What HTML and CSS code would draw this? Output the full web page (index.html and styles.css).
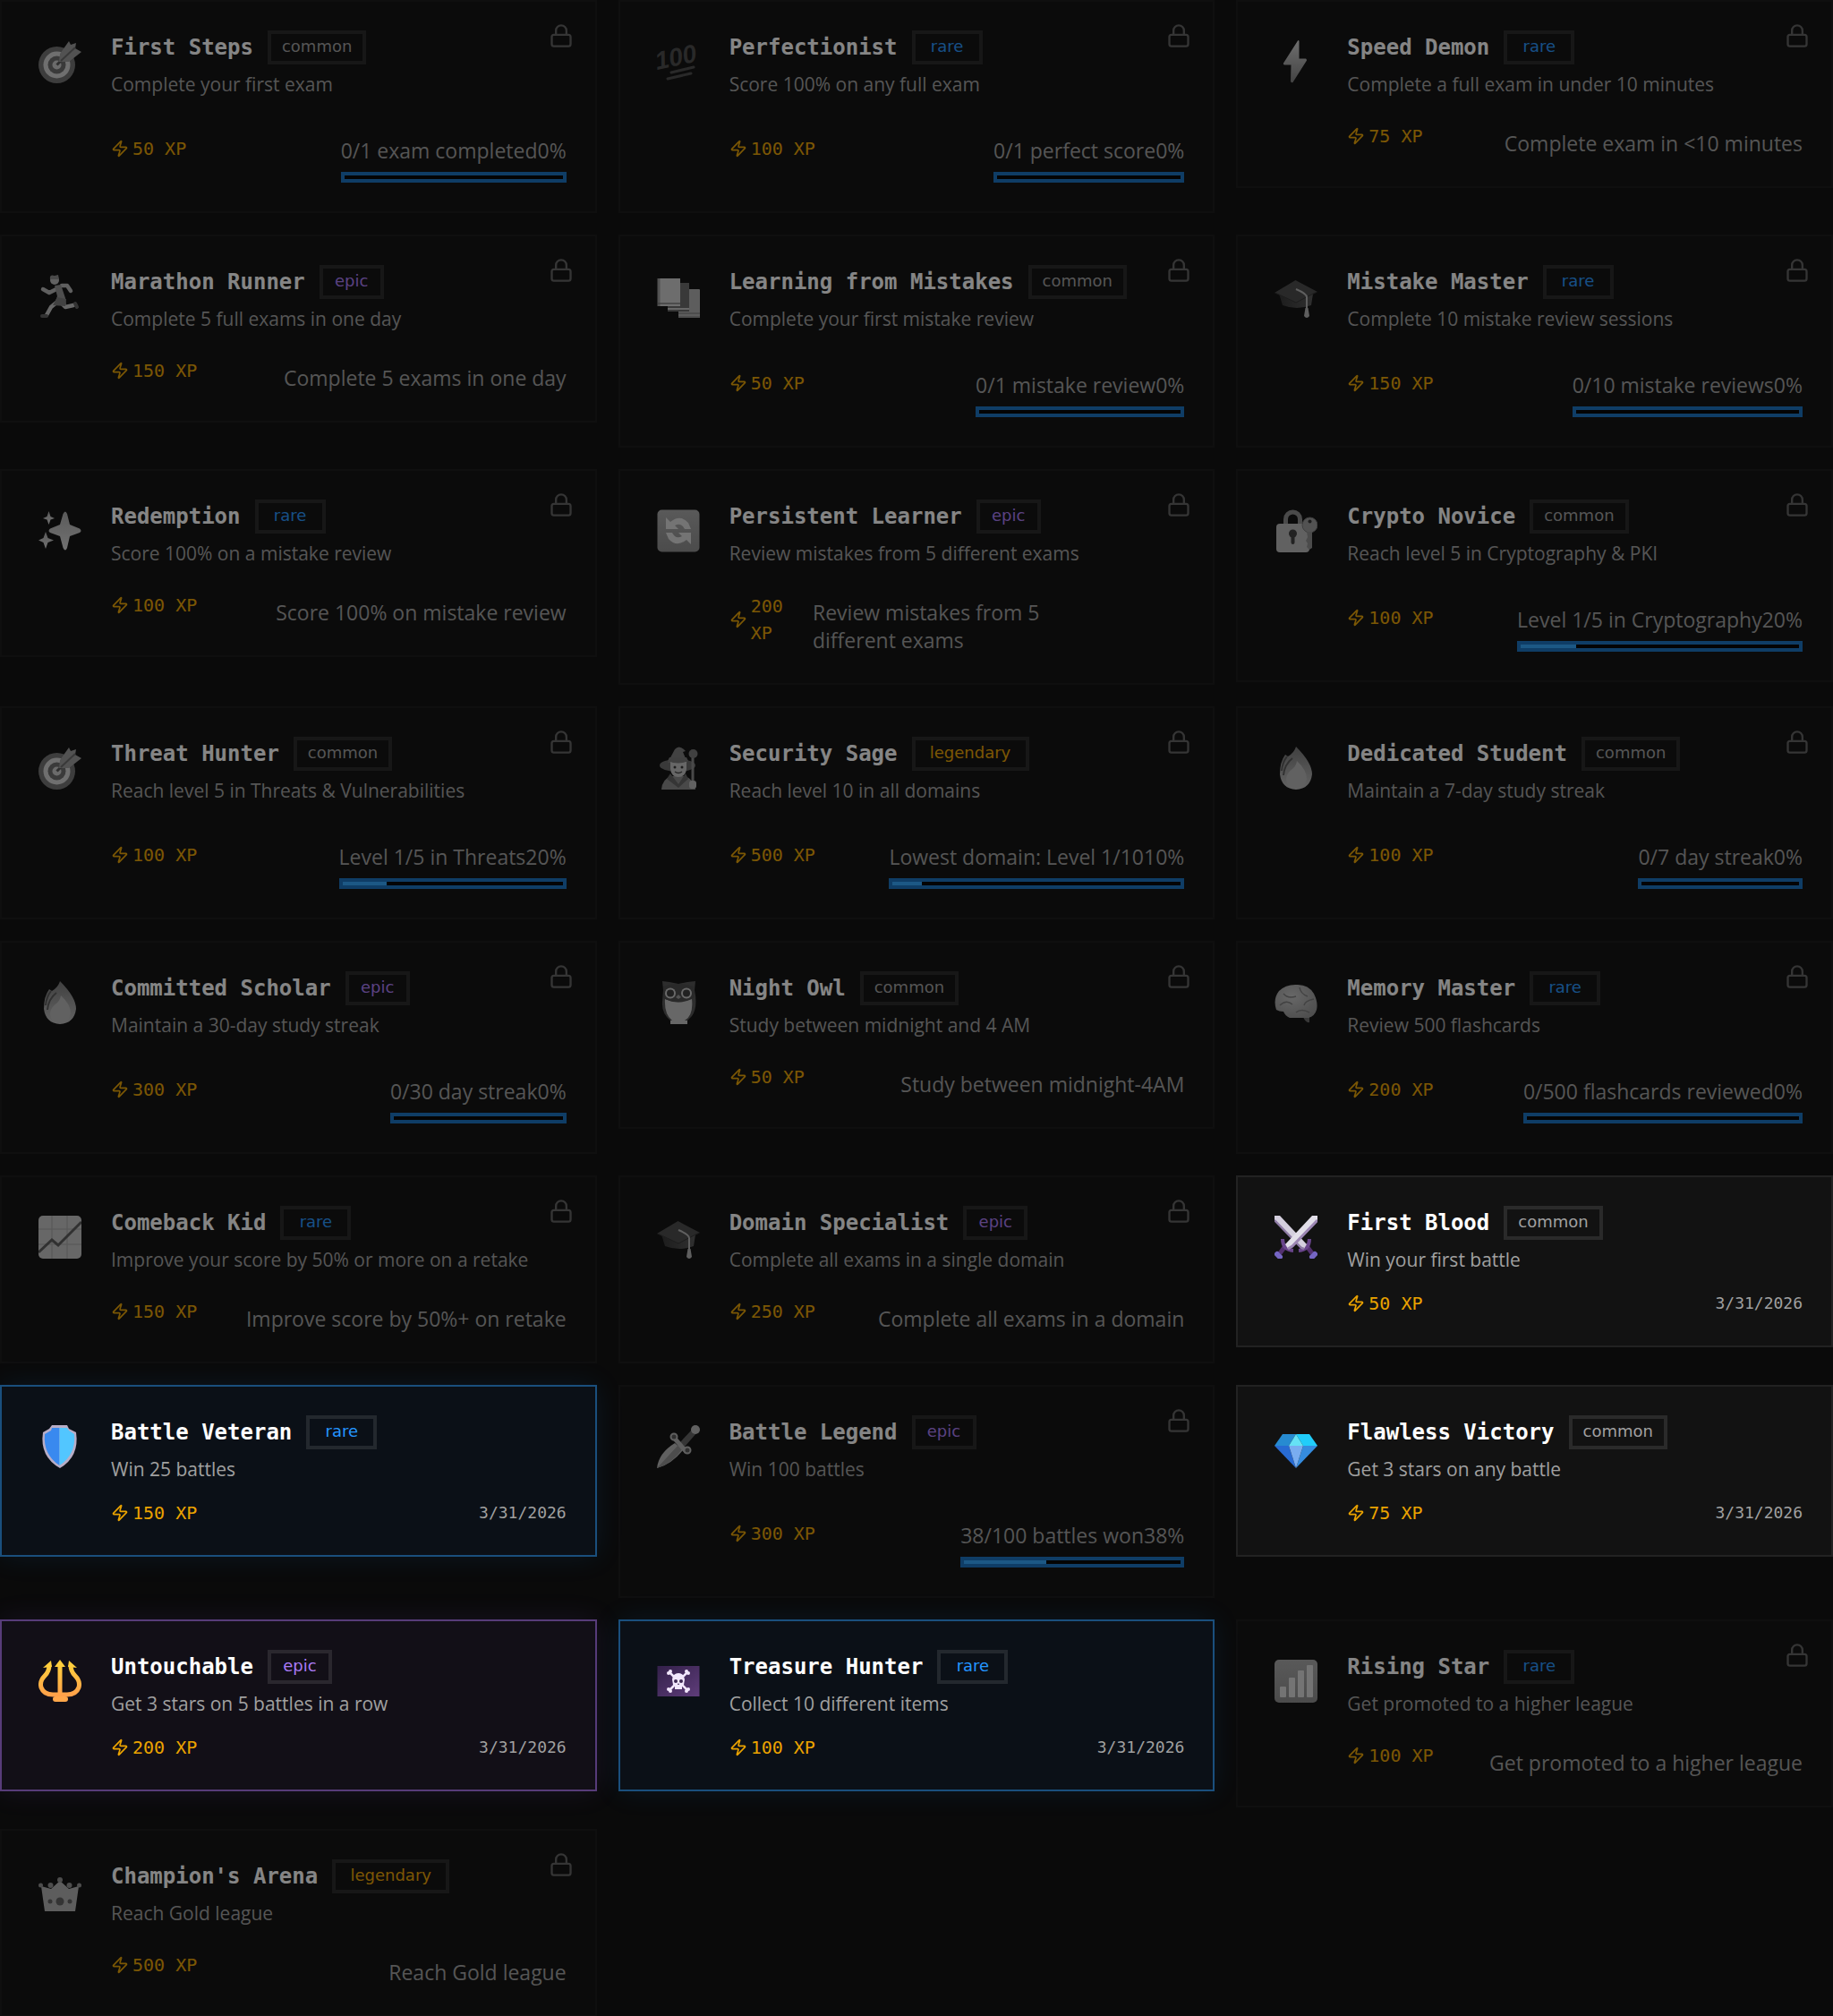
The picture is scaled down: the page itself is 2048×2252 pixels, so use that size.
FILE: index.html
```
<!DOCTYPE html>
<html lang="en">
<head>
    <meta charset="UTF-8">
    <meta name="viewport" content="width=device-width, initial-scale=1.0">
    <title>Achievements</title>
    <link rel="stylesheet" href="styles.css">
</head>
<body>
    <!-- icon sprite -->
    <svg class="sprite" aria-hidden="true">
        <defs>
            <linearGradient id="gLight" x1="0" y1="0" x2="0" y2="1"><stop offset="0" stop-color="#aaa"/><stop offset="1" stop-color="#d8d8d8"/></linearGradient>
            <linearGradient id="gDown" x1="0" y1="0" x2="0" y2="1"><stop offset="0" stop-color="#d2d2d2"/><stop offset="1" stop-color="#7c7c7c"/></linearGradient>
            <linearGradient id="gFlame" x1="0" y1="0" x2="0" y2="1"><stop offset="0" stop-color="#777"/><stop offset="1" stop-color="#bbb"/></linearGradient>
            <linearGradient id="gTile" x1="0" y1="0" x2="0" y2="1"><stop offset="0" stop-color="#a8a8a8"/><stop offset="1" stop-color="#8c8c8c"/></linearGradient>
            <linearGradient id="gCap" x1="0" y1="0" x2="1" y2="0"><stop offset="0" stop-color="#303030"/><stop offset="1" stop-color="#555"/></linearGradient>
            <linearGradient id="gGold" x1="0" y1="0" x2="0" y2="1"><stop offset="0" stop-color="#ffce3d"/><stop offset="1" stop-color="#ff9f4a"/></linearGradient>
            <linearGradient id="gFlag" x1="0" y1="0" x2="1" y2="1"><stop offset="0" stop-color="#33204a"/><stop offset="1" stop-color="#5f3d7a"/></linearGradient>
            <radialGradient id="gBrain" cx=".4" cy=".35" r=".7"><stop offset="0" stop-color="#c4c4c4"/><stop offset="1" stop-color="#949494"/></radialGradient>
        </defs>
        <symbol id="lock" viewBox="0 0 24 24"><g fill="none" stroke="currentColor" stroke-width="2" stroke-linecap="round" stroke-linejoin="round"><rect x="3" y="11" width="18" height="11" rx="2"/><path d="M7 11V7a5 5 0 0 1 10 0v4"/></g></symbol>
        <symbol id="zap" viewBox="0 0 24 24"><path fill="none" stroke="currentColor" stroke-width="2" stroke-linecap="round" stroke-linejoin="round" d="M4 14a1 1 0 0 1-.78-1.63l9.9-10.2a.5.5 0 0 1 .86.46l-1.92 6.02A1 1 0 0 0 13 10h7a1 1 0 0 1 .78 1.63l-9.9 10.2a.5.5 0 0 1-.86-.46l1.92-6.02A1 1 0 0 0 11 14z"/></symbol>

        <symbol id="target" viewBox="0 0 48 48">
            <circle cx="20.500" cy="27.500" r="20.500" fill="#707070"/><circle cx="20.500" cy="27.500" r="15" fill="#d4d4d4"/><circle cx="20.500" cy="27.500" r="10" fill="#6a6a6a"/><circle cx="20.500" cy="27.500" r="5" fill="#ccc"/>
            <path d="M20.500 27.500 31 17" stroke="#555" stroke-width="3"/>
            <path d="M23 24 24 15 34 1 36 5 42 3 41 9 48 13 34 24z" fill="#9a9a9a"/><path d="M25 23 41 8" stroke="#686868" stroke-width="2"/>
        </symbol>
        <symbol id="bolt" viewBox="0 0 48 48"><path d="M26 .500 10 25.500Q9.500 27 11 27.500H18.500L18 46Q19 48 20.500 47L36 22.500Q36 21 35 20.500H27.500L27.500 1Q27-.500 26 .500z" fill="url(#gDown)"/></symbol>
        <symbol id="runner" viewBox="0 0 48 48">
            <g fill="none" stroke-linecap="round" stroke-linejoin="round"><path d="M20 16 12 20 5 16M26 12 32 12 36 18" stroke="#b4b4b4" stroke-width="4.500"/><path d="M20 31 14 36 9 45M27 33 30 36 39 34" stroke="#c4c4c4" stroke-width="4.500"/><path d="M9 46H4M41 32 43 36" stroke="#5c5c5c" stroke-width="4"/></g>
            <path d="M18 12 25 11 30 26 31 34 17 34 21 24z" fill="#929292"/><path d="M21 25 31 27 30 35 16 34z" fill="#7a7a7a"/><circle cx="18" cy="6" r="5" fill="#b8b8b8"/><path d="M13 5Q12-1 18 1L22 0 23 5z" fill="#8a8a8a"/>
        </symbol>
        <symbol id="books" viewBox="0 0 48 48">
            <path d="M24 16H47Q48 16 48 17V46H24z" fill="#b0b0b0"/><path d="M24 43H48M24 47H48" stroke="#909090" stroke-width="2"/><path d="M12 9H36V41H12z" fill="#686868"/><path d="M12 38H36" stroke="#c4c4c4" stroke-width="2"/><path d="M1 4H26V35H1z" fill="#d0d0d0"/><path d="M2 4V35" stroke="#999" stroke-width="3"/><path d="M1 32H26" stroke="#777" stroke-width="1.500"/>
        </symbol>
        <symbol id="gradcap" viewBox="0 0 48 48">
            <path d="M5 21 43 21 41 34Q25 40 9 34z" fill="url(#gCap)"/><path d="M23.500 6 48 19 24 31 0 20z" fill="#484848"/><path d="M1 20 24 31 47 19" fill="none" stroke="#303030"/>
            <path d="M24 16Q36 21 36 25V38" fill="none" stroke="#b4b4b4" stroke-width="2"/><path d="M34.500 37H37.500L39 46Q36 50 33 46z" fill="#b4b4b4"/>
        </symbol>
        <symbol id="sparkles" viewBox="0 0 48 48" fill="url(#gLight)">
            <path d="M27.500 5Q30 0 32 5L35 17 46 21.500Q49 24 46 26L35 30 32 43Q30 48 27.500 43L24 30 13 26Q10 24 13 21.500L24 17z"/><path d="M11.500 2 13.500 8 18 10 13.500 11.500 11.500 17 9.500 11.500 5 10 9.500 8z"/><path d="M8 25 10.500 32 17 34.500 10.500 37 8 44 5.500 37 0 34.500 5.500 32z"/>
        </symbol>
        <symbol id="refresh" viewBox="0 0 48 48">
            <rect x=".500" y=".500" width="47" height="47" rx="5" fill="url(#gTile)"/>
            <path d="M10 9 15 14Q26 5 35 15L38 22H31Q27 14 20 18L24 22H10zM38 39 33 34Q22 43 13 33L10 26H17Q21 34 28 30L24 26H38z" fill="#dedede"/>
        </symbol>
        <symbol id="lockkey" viewBox="0 0 48 48">
            <path d="M12.500 18V11a8 8 0 0 1 16 0v7" fill="none" stroke="#8a8a8a" stroke-width="5"/><rect x="2" y="16" width="37" height="32" rx="4" fill="#b8b8b8"/><circle cx="20.500" cy="27" r="4.500" fill="#3a3a3a"/><path d="M20.500 28V37" stroke="#3a3a3a" stroke-width="4" stroke-linecap="round"/>
            <circle cx="39.500" cy="17.500" r="8.500" fill="#9a9a9a" stroke="#707070"/><circle cx="39.500" cy="13.500" r="2" fill="#333"/><path d="M36 25H42V43L39 45 36 42 37 38 35 35 37 31z" fill="#8c8c8c"/>
        </symbol>
        <symbol id="mage" viewBox="0 0 48 48">
            <ellipse cx="23" cy="21" rx="20" ry="7" fill="#686868"/><path d="M12 18 20 3Q25-3 32 5L29 6 34 18z" fill="#7a7a7a"/><path d="M5 48Q6 36 16 33H31Q41 36 43 48z" fill="#888"/><path d="M15 30 24 42 32 30 35 36 24 46 11 36z" fill="#606060"/><path d="M15 17H33V25Q32 34 24 34 16 34 15 25z" fill="#c4c4c4"/><path d="M12 16Q24 21 35 16L33 12H14z" fill="#777"/>
            <circle cx="20" cy="23" r="1.500" fill="#333"/><circle cx="28" cy="23" r="1.500" fill="#333"/><path d="M20 28Q24 31 28 28" stroke="#444" stroke-width="1.500" fill="none"/><path d="M40 8V47" stroke="#888" stroke-width="3"/><circle cx="40.500" cy="8" r="5" fill="#777"/><rect x="36" y="38" width="8" height="9" rx="3" fill="#b8b8b8"/>
        </symbol>
        <symbol id="flame" viewBox="0 0 48 48">
            <path d="M24 0Q42 18 42 31 40 47 24 48 8 47 6 31 6 17 12 9L15 11Q22 7 24 0z" fill="url(#gFlame)"/><path d="M8 27Q9 17 14 11M10 32Q11 20 20 13" stroke="#585858" stroke-width="2" fill="none"/><path d="M25 16Q36 26 36 36 34 47 24 47 13 46 13 36 14 29 20 25 24 22 25 16z" fill="#b8b8b8"/>
        </symbol>
        <symbol id="owl" viewBox="0 0 48 48">
            <path d="M6 0 14 1 24 3 34 1 43 0 42 10Q46 29 39 39L34 44H15Q5 36 6 23L7 10z" fill="#505050"/><path d="M9 20Q24 27 39 20 41 38 31 44H17Q8 37 9 20z" fill="#c4c4c4"/><path d="M7 6Q24 0 41 6L42 18Q24 28 7 19z" fill="#484848"/>
            <circle cx="15" cy="13.500" r="6" fill="#c8c8c8"/><circle cx="33" cy="13.500" r="6" fill="#c8c8c8"/><circle cx="15" cy="13.500" r="4" fill="#383838"/><circle cx="33" cy="13.500" r="4" fill="#383838"/><path d="M21 18 24 15 27 18 24 20z" fill="#999"/><path d="M15 44H34V48H15z" fill="#c4c4c4"/>
        </symbol>
        <symbol id="brain" viewBox="0 0 48 48">
            <path d="M32 40H39V46Q35 47 32 40z" fill="#666"/><path d="M2 32Q-2 20 5 11 13 3 26 4 38 4 44 14 49 24 47 32 45 39 38 41L17 41Q12 39 10 34 5 34 2 32z" fill="url(#gBrain)"/><path d="M10 14Q15 20 24 17M28 7Q29 14 37 17M44 20Q34 22 33 27M6 27Q13 20 20 26M24 35Q30 30 39 35" stroke="#7a7a7a" stroke-width="1.500" fill="none"/>
        </symbol>
        <symbol id="chart" viewBox="0 0 48 48">
            <rect width="48" height="48" rx="5" fill="#c4c4c4"/><path d="M0 15H48M0 32H48M15 0V48M32 0V48" stroke="#a0a0a0"/><path d="M0 41 15 27 22 33 48 7" fill="none" stroke="#585858" stroke-width="3"/>
        </symbol>
        <symbol id="swords" viewBox="0 0 48 48">
            <path d="M6 42 12 34M42 42 36 34" stroke="#53306f" stroke-width="5"/><path d="M3 43 6 46M45 43 42 46" stroke="#7565c3" stroke-width="6" stroke-linecap="round"/><path d="M9 26Q9 38 21 39M39 26Q39 38 27 39" fill="none" stroke="#69458b" stroke-width="4"/>
            <path d="M0 0H6L36 32 33 37 28 34 0 5z" fill="#d4cfde"/><path d="M0 5 28 34 30 36 33 37" fill="none" stroke="#8e7ba5" stroke-width="2.500"/><path d="M48 0H42L12 32 15 37 20 34 48 5z" fill="#e2dfe9"/><path d="M48 5 20 34 15 37" fill="none" stroke="#9c86b3" stroke-width="3"/>
        </symbol>
        <symbol id="shield" viewBox="0 0 48 48">
            <path d="M15 0H32L34 4 42 8Q46 35 24 48 1 35 5 8L12 4z" fill="#b8adc6"/><path d="M23.500 3H15L14 6 7 10Q5 33 23.500 45z" fill="#3989ef"/><path d="M23.500 3H32L34 6 40 10Q42 33 23.500 45z" fill="#52c6ff"/>
        </symbol>
        <symbol id="dagger" viewBox="0 0 48 48">
            <path d="M0 48Q2 31 20 20L29 28Q16 44 0 48z" fill="#b8b8b8"/><path d="M0 48 24 22 28 27Q17 43 0 48z" fill="#909090"/><path d="M26 19 40 4 45 8 31 24z" fill="#606060"/><path d="M19 14 33 30" stroke="#b4b4b4" stroke-width="5"/><circle cx="19" cy="13" r="3.500" fill="#555" stroke="#b4b4b4" stroke-width="2"/><circle cx="34" cy="28" r="3.500" fill="#555" stroke="#b4b4b4" stroke-width="2"/><circle cx="43" cy="5" r="5" fill="#b8b8b8"/>
        </symbol>
        <symbol id="diamond" viewBox="0 0 48 48">
            <path d="M9 10 0 23H16L24 10z" fill="#278bd1"/><path d="M39 10 48 23H32L24 10z" fill="#21cdfa"/><path d="M24 10 32 23H16z" fill="#66e2f5"/><path d="M0 23H16L24 48z" fill="#286bd3"/><path d="M48 23H32L24 48z" fill="#358cdf"/><path d="M16 23H32L24 48z" fill="#79adf0"/>
        </symbol>
        <symbol id="trident" viewBox="0 0 48 48">
            <path d="M12 6Q12 13 7 18 1 24 3 31 6 39 16 39H32Q42 39 45 31 47 24 41 18 36 13 36 6M24 6V41" fill="none" stroke="url(#gGold)" stroke-width="5"/><path d="M5 9 14 1 15 8zM18 8 24 0 30 8zM33 8 34 1 43 9z" fill="#ffce3d"/><rect x="16" y="41" width="17" height="6" rx="3" fill="#ffa74b"/>
        </symbol>
        <symbol id="pirate" viewBox="0 0 48 48">
            <rect x=".500" y="7" width="47" height="34" fill="url(#gFlag)"/><path d="M14 14 34 34M34 14 14 34" stroke="#f2e7fc" stroke-width="2.500"/><g fill="#f2e7fc"><circle cx="13" cy="15" r="2"/><circle cx="15" cy="13" r="2"/><circle cx="35" cy="15" r="2"/><circle cx="33" cy="13" r="2"/><circle cx="13" cy="33" r="2"/><circle cx="15" cy="35" r="2"/><circle cx="35" cy="33" r="2"/><circle cx="33" cy="35" r="2"/></g><path d="M17 22Q18 15 24 15 30 15 31 22L30 28 28 29V33H20V29L18 28z" fill="#f2e7fc"/><circle cx="21" cy="24" r="2" fill="#3d2752"/><circle cx="27" cy="24" r="2" fill="#3d2752"/><path d="M23 28 24 26 25 28z" fill="#3d2752"/>
        </symbol>
        <symbol id="bars" viewBox="0 0 48 48">
            <rect width="48" height="48" rx="5" fill="url(#gTile)"/><g fill="#dedede"><rect x="6" y="30" width="7" height="12" rx="1"/><rect x="16" y="20" width="7" height="22" rx="1"/><rect x="26" y="12" width="7" height="30" rx="1"/><rect x="36" y="6" width="7" height="36" rx="1"/></g>
        </symbol>
        <symbol id="crown" viewBox="0 0 48 48">
            <path d="M3 19 14 22 24 13 34 22 45 19 41 47H7z" fill="#b0b0b0"/><g fill="#8f8f8f"><circle cx="2.500" cy="18" r="2.500"/><circle cx="45.500" cy="18" r="2.500"/><circle cx="13.500" cy="18" r="3"/><circle cx="34.500" cy="18" r="3"/><circle cx="24" cy="12" r="3"/></g><g fill="#5e5e5e"><circle cx="24" cy="36" r="4.500"/><circle cx="13" cy="36" r="2.500"/><circle cx="35" cy="36" r="2.500"/></g>
        </symbol>
    </svg>

    <main id="achievements" class="grid"></main>

    <script>
        var achievements = [
            { icon: "target", name: "First Steps", rarity: "common", desc: "Complete your first exam", xp: 50, text: "0/1 exam completed", percent: 0 },
            { icon: "hundred", name: "Perfectionist", rarity: "rare", desc: "Score 100% on any full exam", xp: 100, text: "0/1 perfect score", percent: 0 },
            { icon: "bolt", name: "Speed Demon", rarity: "rare", desc: "Complete a full exam in under 10 minutes", xp: 75, text: "Complete exam in <10 minutes" },
            { icon: "runner", name: "Marathon Runner", rarity: "epic", desc: "Complete 5 full exams in one day", xp: 150, text: "Complete 5 exams in one day" },
            { icon: "books", name: "Learning from Mistakes", rarity: "common", desc: "Complete your first mistake review", xp: 50, text: "0/1 mistake review", percent: 0 },
            { icon: "gradcap", name: "Mistake Master", rarity: "rare", desc: "Complete 10 mistake review sessions", xp: 150, text: "0/10 mistake reviews", percent: 0 },
            { icon: "sparkles", name: "Redemption", rarity: "rare", desc: "Score 100% on a mistake review", xp: 100, text: "Score 100% on mistake review" },
            { icon: "refresh", name: "Persistent Learner", rarity: "epic", desc: "Review mistakes from 5 different exams", xp: 200, text: "Review mistakes from 5 different\u00a0exams" },
            { icon: "lockkey", name: "Crypto Novice", rarity: "common", desc: "Reach level 5 in Cryptography & PKI", xp: 100, text: "Level 1/5 in Cryptography", percent: 20 },
            { icon: "target", name: "Threat Hunter", rarity: "common", desc: "Reach level 5 in Threats & Vulnerabilities", xp: 100, text: "Level 1/5 in Threats", percent: 20 },
            { icon: "mage", name: "Security Sage", rarity: "legendary", desc: "Reach level 10 in all domains", xp: 500, text: "Lowest domain: Level 1/10", percent: 10 },
            { icon: "flame", name: "Dedicated Student", rarity: "common", desc: "Maintain a 7-day study streak", xp: 100, text: "0/7 day streak", percent: 0 },
            { icon: "flame", name: "Committed Scholar", rarity: "epic", desc: "Maintain a 30-day study streak", xp: 300, text: "0/30 day streak", percent: 0 },
            { icon: "owl", name: "Night Owl", rarity: "common", desc: "Study between midnight and 4 AM", xp: 50, text: "Study between midnight-4AM" },
            { icon: "brain", name: "Memory Master", rarity: "rare", desc: "Review 500 flashcards", xp: 200, text: "0/500 flashcards reviewed", percent: 0 },
            { icon: "chart", name: "Comeback Kid", rarity: "rare", desc: "Improve your score by 50% or more on a retake", xp: 150, text: "Improve score by 50%+ on retake" },
            { icon: "gradcap", name: "Domain Specialist", rarity: "epic", desc: "Complete all exams in a single domain", xp: 250, text: "Complete all exams in a domain" },
            { icon: "swords", name: "First Blood", rarity: "common", desc: "Win your first battle", xp: 50, date: "3/31/2026" },
            { icon: "shield", name: "Battle Veteran", rarity: "rare", desc: "Win 25 battles", xp: 150, date: "3/31/2026" },
            { icon: "dagger", name: "Battle Legend", rarity: "epic", desc: "Win 100 battles", xp: 300, text: "38/100 battles won", percent: 38 },
            { icon: "diamond", name: "Flawless Victory", rarity: "common", desc: "Get 3 stars on any battle", xp: 75, date: "3/31/2026" },
            { icon: "trident", name: "Untouchable", rarity: "epic", desc: "Get 3 stars on 5 battles in a row", xp: 200, date: "3/31/2026" },
            { icon: "pirate", name: "Treasure Hunter", rarity: "rare", desc: "Collect 10 different items", xp: 100, date: "3/31/2026" },
            { icon: "bars", name: "Rising Star", rarity: "rare", desc: "Get promoted to a higher league", xp: 100, text: "Get promoted to a higher league" },
            { icon: "crown", name: "Champion's Arena", rarity: "legendary", desc: "Reach Gold league", xp: 500, text: "Reach Gold league" }
        ];

        function escapeText(text) {
            return text.replace(/&/g, "&amp;").replace(/</g, "&lt;");
        }

        function svg(name, className) {
            return '<svg class="' + className + '" aria-hidden="true"><use href="#' + name + '"/></svg>';
        }

        function renderPicture(icon) {
            // the 100 has live text in it, so it is not in the sprite
            if (icon === "hundred") {
                return '<svg class="picture" viewBox="0 0 48 48" aria-hidden="true">' +
                    '<text x="0" y="33" class="hundred-num" transform="rotate(-12 0 33)">100</text>' +
                    '<path class="hundred-line" d="M16 36 41 30M12 43 38 37"/></svg>';
            }
            return svg(icon, "picture");
        }

        function renderStatus(item) {
            if (item.date) {
                return '<time class="date">' + item.date + '</time>';
            }
            if (item.percent === undefined) {
                return '<div class="hint">' + escapeText(item.text) + '</div>';
            }
            return '<div class="progress">' +
                '<div class="progress-label"><span>' + escapeText(item.text) + '</span><span>' + item.percent + '%</span></div>' +
                '<div class="bar"><div class="bar-fill" style="width: ' + item.percent + '%"></div></div>' +
                '</div>';
        }

        function renderCard(item) {
            var state = item.date ? "unlocked" : "locked";
            return '<article class="card ' + state + ' ' + item.rarity + '">' +
                (item.date ? "" : svg("lock", "lock")) +
                '<div class="icon">' + renderPicture(item.icon) + '</div>' +
                '<div class="body">' +
                '<div class="head"><h3>' + item.name + '</h3><span class="badge">' + item.rarity + '</span></div>' +
                '<p class="desc">' + escapeText(item.desc) + '</p>' +
                '<div class="foot"><div class="xp">' + svg("zap", "zap") + '<span>' + item.xp + ' XP</span></div>' + renderStatus(item) + '</div>' +
                '</div></article>';
        }

        document.getElementById("achievements").innerHTML = achievements.map(renderCard).join("");
    </script>
</body>
</html>
```
FILE: styles.css
```
* { box-sizing: border-box; }
body {
    margin: 0;
    background-color: #0a0a0a;
    color: #a0a0a0;
    font-family: "Open Sans", sans-serif;
    font-size: 23px;
    line-height: 31px;
}
h3, p { margin: 0; }
.sprite { position: absolute; width: 0; height: 0; }
.grid {
    display: grid;
    grid-template-columns: repeat(3, minmax(0, 1fr));
    gap: 24px;
    align-items: start;
}
.card {
    position: relative;
    display: flex;
    gap: 24px;
    padding: 32px;
    border: 2px solid #222;
    background-color: #121212;
}
.unlocked.rare {
    background-color: #0b1017;
    border-color: #1a4f7d;
    box-shadow: 0 0 30px rgba(30, 144, 255, 0.1);
}
.unlocked.epic {
    background-color: #120f17;
    border-color: #573c79;
    box-shadow: 0 0 30px rgba(160, 107, 255, 0.1);
}
.locked {
    background-color: #0c0c0c;
    border-color: #141414;
    opacity: 0.5;
}
.lock {
    position: absolute;
    top: 24px;
    right: 24px;
    width: 28px;
    height: 28px;
    color: #606060;
}
.icon {
    display: flex;
    flex: none;
    align-items: center;
    justify-content: center;
    width: 66px;
    height: 70px;
}
.picture { width: 48px; height: 48px; overflow: visible; }
.hundred-num {
    fill: #484848;
    font: italic bold 28px "Liberation Sans", sans-serif;
}
.hundred-line {
    stroke: #484848;
    stroke-width: 3px;
    stroke-linecap: round;
}
.body { flex: 1; min-width: 0; }
.head {
    display: flex;
    align-items: center;
    gap: 16px;
    height: 38px;
    margin-bottom: 6px;
}
h3 {
    color: #fff;
    font-family: "DejaVu Sans Mono", monospace;
    font-size: 24px;
    font-weight: bold;
}
.badge {
    height: 38px;
    padding: 0 12px;
    border: 4px solid rgba(255, 255, 255, 0.1);
    color: #a0a0a0;
    font-family: "DejaVu Sans", sans-serif;
    font-size: 18px;
    line-height: 28px;
    text-align: center;
}
.rare .badge { min-width: 79px; color: #2496ff; }
.epic .badge { min-width: 72px; color: #a97af5; }
.legendary .badge { min-width: 131px; color: #eba300; }
.desc {
    margin-bottom: 18px;
    font-size: 21px;
    line-height: 32px;
}
.foot {
    display: flex;
    align-items: center;
    justify-content: space-between;
}
.xp {
    display: flex;
    align-items: center;
    gap: 4px;
    color: #eba300;
    font-family: "DejaVu Sans Mono", monospace;
    font-size: 20px;
    line-height: 30px;
}
.zap { flex: none; width: 20px; height: 20px; }
.date {
    font-family: "DejaVu Sans Mono", monospace;
    font-size: 18px;
    line-height: 28px;
}
.hint { margin-top: 17px; }
.progress { margin-top: 25px; }
.bar {
    height: 12px;
    margin-top: 8px;
    border: 4px solid #1470c2;
    background-color: #000;
}
.bar-fill { height: 4px; background-color: #2ea6ff; }
```
